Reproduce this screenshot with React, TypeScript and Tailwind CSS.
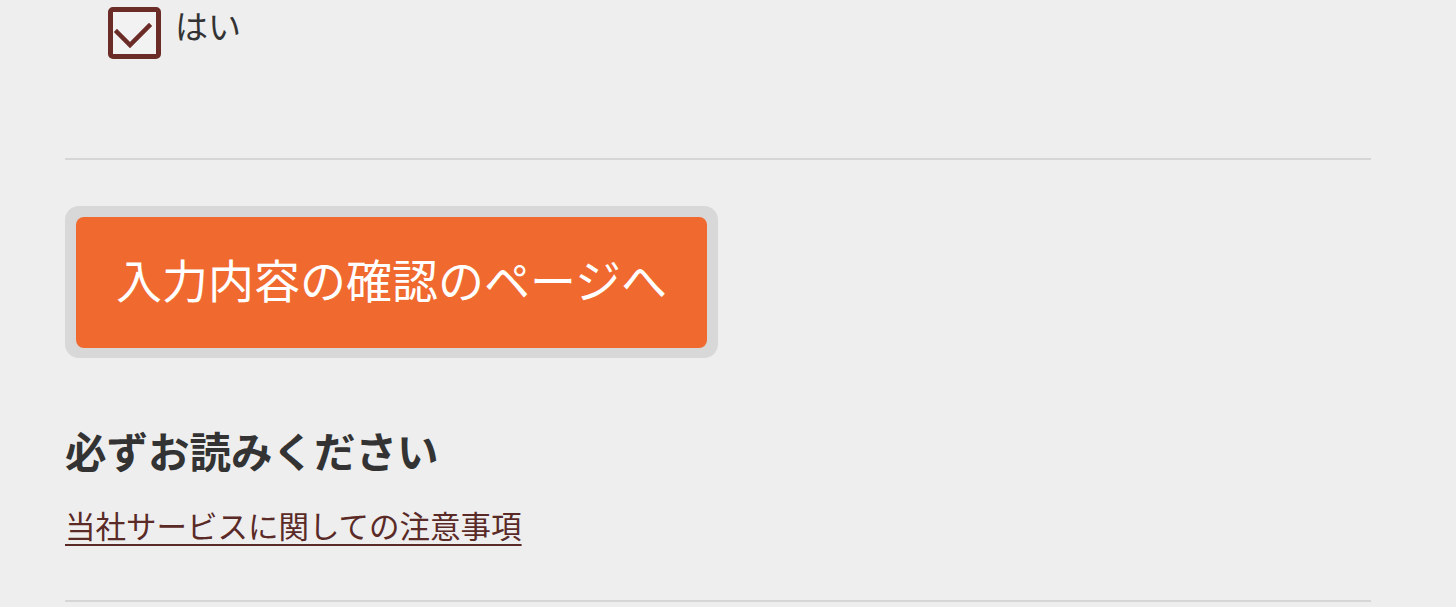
const font = { fontFamily: '"Noto Sans CJK JP", "Noto Sans", sans-serif' };

const App: React.FC = () => {
  return (
    <div className="min-h-[607px] bg-[#eeeeee] text-[#333333]" style={font}>
      <div className="w-[1306px] ml-[65px]">
        {/* checkbox row */}
        <div className="flex items-start pl-[43px] pt-[7px]">
          <div className="w-[53px] h-[52px] border-[5px] border-[#6b2b27] rounded-[5px] bg-[#f2f2f2] flex items-center justify-center">
            <svg width="43" height="42" viewBox="0 0 43 42">
              <path d="M4 20 L17 33 L36 14" fill="none" stroke="#6b2b27" strokeWidth="4.5" strokeLinecap="square" />
            </svg>
          </div>
          <span className="ml-[14px] text-[33px] leading-[44px] -mt-[4px]">はい</span>
        </div>

        <div className="mt-[99px] h-[2px] bg-[#d6d6d6]" />

        {/* submit button */}
        <div className="mt-[46px] w-[653px] h-[152px] rounded-[14px] bg-[#d8d8d8] p-[11px] pb-[10px]">
          <button className="w-full h-full rounded-[8px] bg-[#f06a30] text-white text-[46px] leading-none flex items-center justify-center pb-[10px]">
            入力内容の確認のページへ
          </button>
        </div>

        <h2 className="mt-[64px] text-[41.5px] leading-[56px] font-bold text-[#333333]">必ずお読みください</h2>

        <a href="#" className="inline-block mt-[26px] text-[30.5px] leading-[42px] text-[#5a2a27] underline underline-offset-[6px] decoration-[2px]">
          当社サービスに関しての注意事項
        </a>

        <div className="mt-[54px] h-[2px] bg-[#d6d6d6]" />
      </div>
    </div>
  );
};

export default App;
